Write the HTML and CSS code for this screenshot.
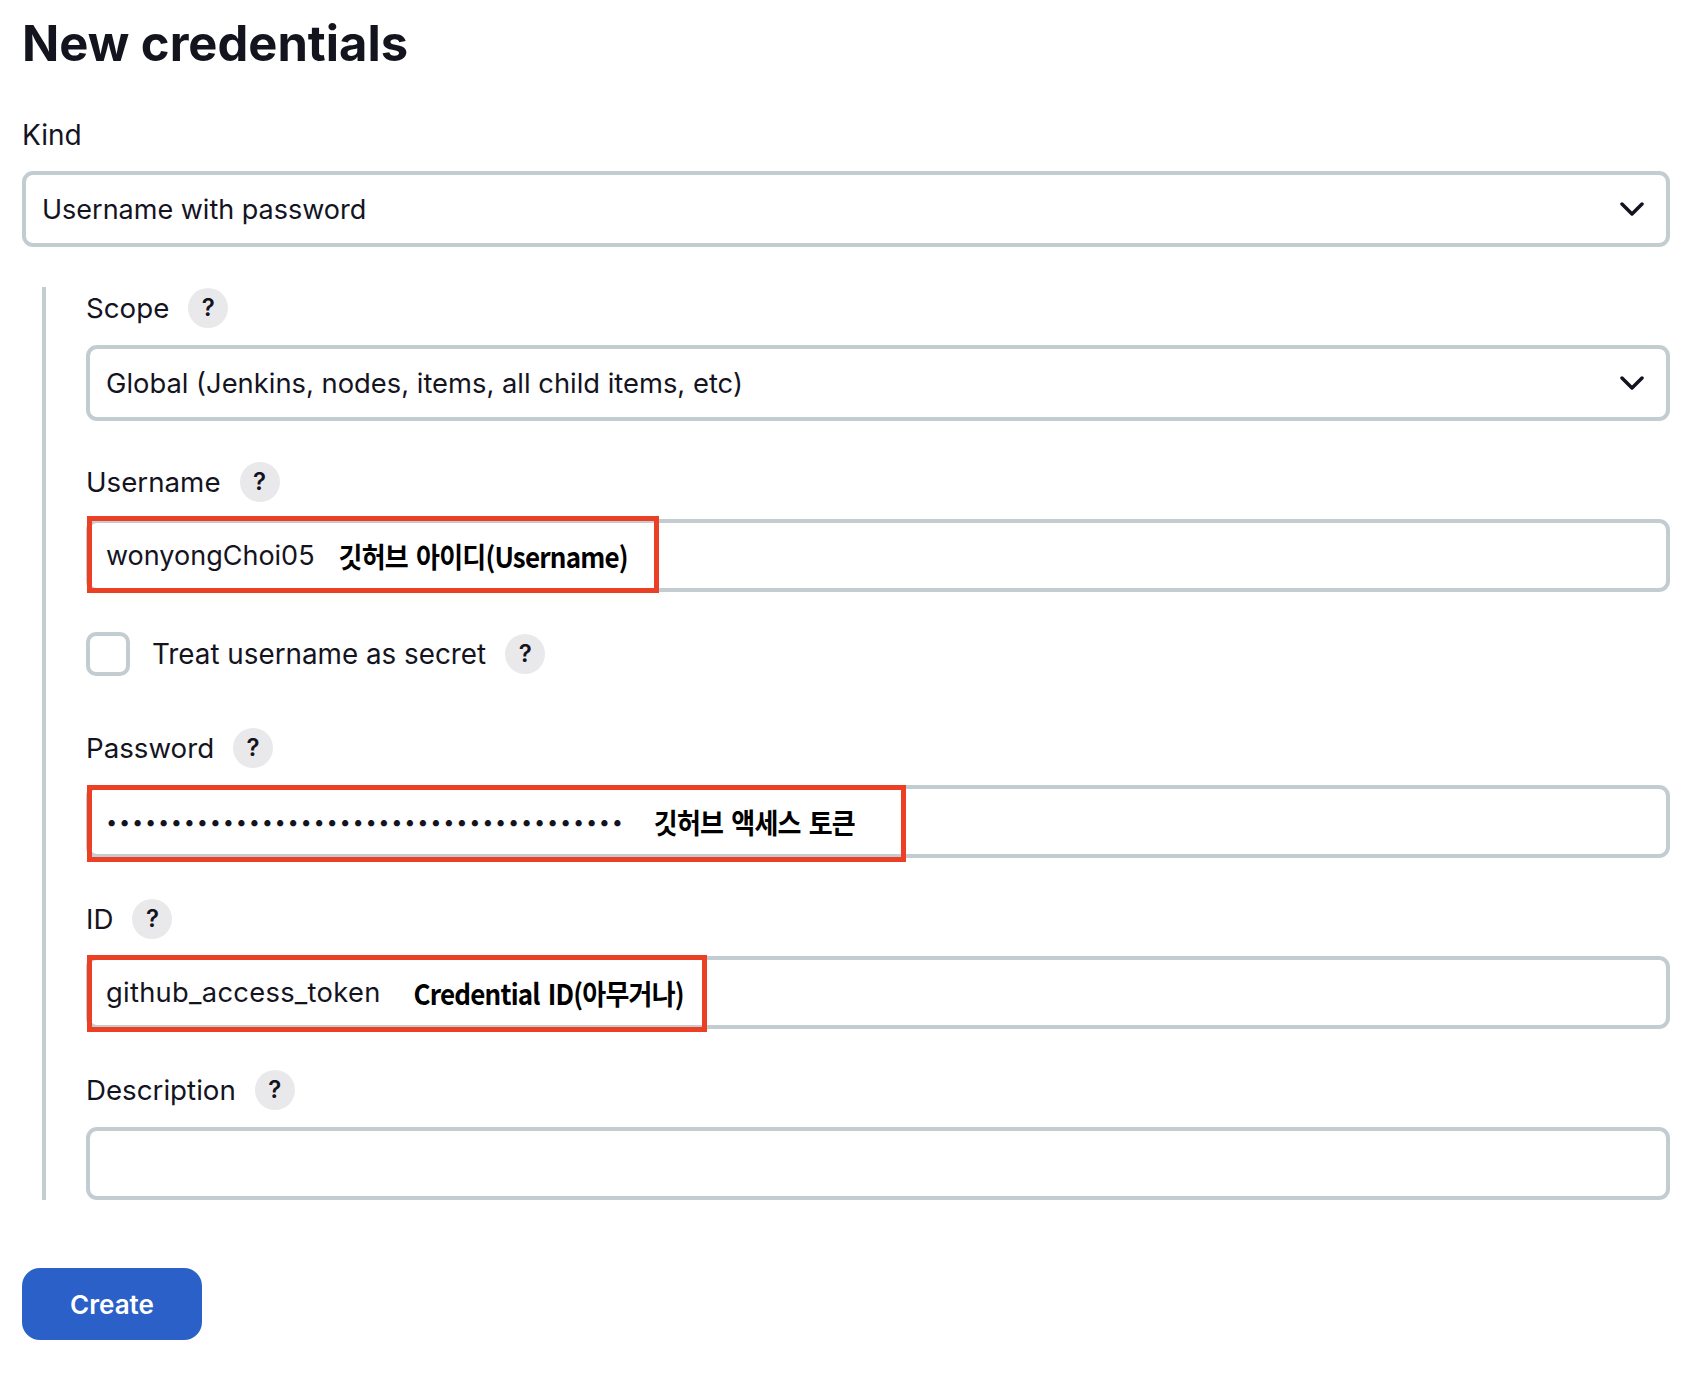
FILE: index.html
```html
<!DOCTYPE html>
<html lang="en">
<head>
    <meta charset="UTF-8">
    <title>New credentials</title>
    <link rel="stylesheet" href="styles.css">
</head>
<body>

<div class="page">
    <h1>New credentials</h1>

    <div class="kind-label">Kind</div>
    <div class="box select">
        <span class="value-narrow">Username with password</span>
        <svg class="chevron" viewBox="0 0 24 14"><path d="M2 2l10 10L22 2"/></svg>
    </div>

    <div class="nested">
        <div class="label-row"><span>Scope</span><span class="help">?</span></div>
        <div class="box select">
            <span class="value-wide">Global (Jenkins, nodes, items, all child items, etc)</span>
            <svg class="chevron" viewBox="0 0 24 14"><path d="M2 2l10 10L22 2"/></svg>
        </div>

        <div class="label-row gap-top"><span>Username</span><span class="help">?</span></div>
        <div class="box text-input">
            <span class="value-narrow">wonyongChoi05</span>
            <span class="note note-username">깃허브 아이디(Username)</span>
            <div class="red-frame frame-username"></div>
        </div>

        <div class="check-row">
            <span class="checkbox"></span>
            <span>Treat username as secret</span>
            <span class="help">?</span>
        </div>

        <div class="label-row password-row"><span>Password</span><span class="help">?</span></div>
        <div class="box text-input">
            <span class="dots">••••••••••••••••••••••••••••••••••••••••</span>
            <span class="note note-password">깃허브 액세스 토큰</span>
            <div class="red-frame frame-password"></div>
        </div>

        <div class="label-row gap-top"><span>ID</span><span class="help">?</span></div>
        <div class="box text-input">
            <span class="value-id">github_access_token</span>
            <span class="note note-id">Credential ID(아무거나)</span>
            <div class="red-frame frame-id"></div>
        </div>

        <div class="label-row gap-top"><span>Description</span><span class="help">?</span></div>
        <div class="box text-input"></div>
    </div>

    <button class="create">Create</button>
</div>

</body>
</html>
```

FILE: styles.css
```css
body {
    margin: 0;
    background: #ffffff;
    color: #14141f;
    font-family: Inter, "Noto Sans CJK KR", sans-serif;
    font-size: 27.3px;
}

.page {
    padding: 14px 24px 40px 22px;
}

h1 {
    margin: 0;
    font-size: 48.9px;
    font-weight: 700;
    line-height: 60px;
}

.kind-label {
    margin-top: 45px;
    font-size: 28px;
    line-height: 32px;
}

.box {
    box-sizing: border-box;
    display: flex;
    align-items: center;
    position: relative;
    height: 73px;
    padding: 0 16px;
    border: 4px solid #c3ccd1;
    border-radius: 11px;
    background: #fff;
}

.select {
    height: 76px;
    margin-top: 20px;
    justify-content: space-between;
}

.value-narrow {
    font-size: 27px;
}

.value-wide {
    font-size: 27.35px;
}

.value-id {
    letter-spacing: 0.3px;
}

.chevron {
    width: 24px;
    height: 14px;
    margin-right: 6px;
    fill: none;
    stroke: #14141f;
    stroke-width: 3.5;
    stroke-linecap: round;
    stroke-linejoin: round;
}

.nested {
    margin: 40px 0 0 20px;
    padding: 1px 0 0 40px;
    border-left: 4px solid #c3ccd1;
}

.nested .select {
    margin-top: 17px;
}

.label-row {
    display: flex;
    align-items: center;
    gap: 19px;
    height: 40px;
    margin-bottom: 17px;
    font-size: 27.7px;
}

.gap-top {
    margin-top: 41px;
}

.password-row {
    margin-top: 52px;
}

.help {
    flex: none;
    width: 40px;
    height: 40px;
    border-radius: 50%;
    background: #e9e9eb;
    font-size: 24px;
    font-weight: 600;
    line-height: 40px;
    text-align: center;
}

.check-row {
    display: flex;
    align-items: center;
    height: 44px;
    margin-top: 40px;
    font-size: 27.8px;
}

.checkbox {
    box-sizing: border-box;
    width: 44px;
    height: 44px;
    margin-right: 22px;
    border: 4px solid #c3ccd1;
    border-radius: 10px;
}

.check-row .help {
    margin-left: 19px;
}

.dots {
    font-size: 20px;
    letter-spacing: 1.72px;
}

.note {
    display: inline-block;
    color: #000;
    font-family: "Noto Sans CJK KR", sans-serif;
    font-weight: 700;
    font-size: 26px;
    letter-spacing: -0.8px;
    word-spacing: 3px;
    transform: scaleY(1.1);
}

.note-username {
    margin-left: 24px;
}

.note-password {
    margin-left: 29px;
}

.note-id {
    margin-left: 33px;
}

/* annotation boxes drawn on top of the fields */
.red-frame {
    box-sizing: border-box;
    position: absolute;
    left: -3px;
    height: 77px;
    border: 5px solid #ec4026;
}

.frame-username {
    top: -7px;
    width: 572px;
}

.frame-password {
    top: -4px;
    width: 819px;
}

.frame-id {
    top: -5px;
    width: 620px;
}

.create {
    display: block;
    width: 180px;
    height: 72px;
    margin-top: 68px;
    border: none;
    border-radius: 18px;
    background: #2b60c9;
    color: #fff;
    font-family: inherit;
    font-size: 26px;
    font-weight: 600;
}
```
